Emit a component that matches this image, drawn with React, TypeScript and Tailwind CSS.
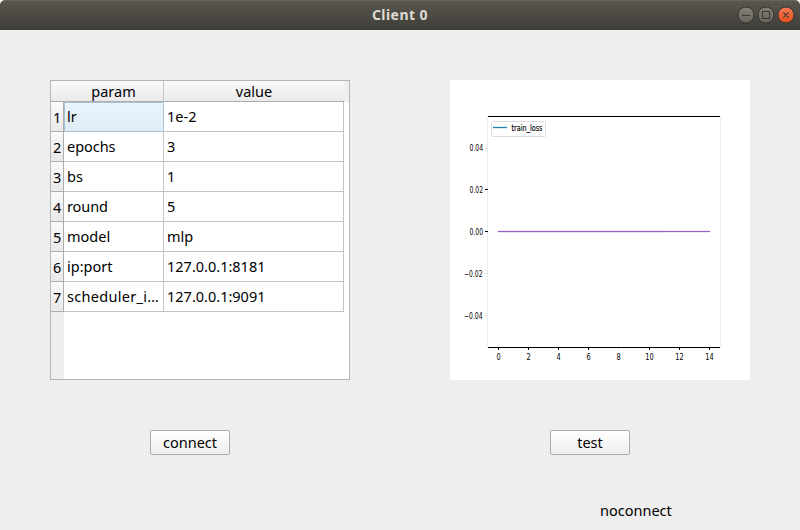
import React from "react";

const rows = [
  { name: "lr", value: "1e-2", spacing: "tracking-normal" },
  { name: "epochs", value: "3", spacing: "tracking-[-0.05px]" },
  { name: "bs", value: "1", spacing: "tracking-normal" },
  { name: "round", value: "5", spacing: "tracking-[-0.1px]" },
  { name: "model", value: "mlp", spacing: "tracking-normal" },
  { name: "ip:port", value: "127.0.0.1:8181", spacing: "tracking-normal" },
  { name: "scheduler_i…", value: "127.0.0.1:9091", spacing: "tracking-[0.3px]" },
];

const yTicks = [
  { y: 68, label: "0.04", x: 19.5, w: 13.5, strong: false },
  { y: 109.5, label: "0.02", x: 19.5, w: 13.5, strong: true },
  { y: 151.5, label: "0.00", x: 19.5, w: 13.5, strong: true },
  { y: 193.5, label: "−0.02", x: 14, w: 18.5, strong: false },
  { y: 235.5, label: "−0.04", x: 14, w: 18.5, strong: false },
];

const xTicks = [
  { x: 48.5, label: "0" },
  { x: 78.5, label: "2" },
  { x: 108.5, label: "4" },
  { x: 138.5, label: "6" },
  { x: 168.5, label: "8" },
  { x: 199.5, label: "10" },
  { x: 229.5, label: "12" },
  { x: 259.5, label: "14" },
];

function TitleBar() {
  return (
    <header className="grid h-[30px] grid-cols-[1fr_auto_1fr] items-start rounded-t-[5px] border-t border-[#67645b] bg-linear-to-b from-[#5a574e] to-[#3e3d38]">
      <span />
      <h1 className="mt-[4px] text-[14px] leading-[20px] font-bold tracking-[0.45px] text-[#dfdbd2]">Client 0</h1>
      <svg className="mt-[3px] mr-[3px] justify-self-end" width="61" height="22" viewBox="0 0 61 22">
        <defs>
          <linearGradient id="grey" x2="0" y2="1">
            <stop stopColor="#85827a" />
            <stop offset="1" stopColor="#65635b" />
          </linearGradient>
          <linearGradient id="orange" x2="0" y2="1">
            <stop stopColor="#f47d55" />
            <stop offset="1" stopColor="#e74c1d" />
          </linearGradient>
        </defs>
        <circle cx="10" cy="11" r="8" fill="url(#grey)" stroke="#35342f" />
        <circle cx="30" cy="11" r="8" fill="url(#grey)" stroke="#35342f" />
        <circle cx="50" cy="11" r="8" fill="url(#orange)" stroke="#35342f" />
        <path d="M6 11.5h8M26.5 7.5h7v7h-7zM47.3 8.3l5.4 5.4M52.7 8.3l-5.4 5.4" fill="none" stroke="#383630" strokeWidth="1.1" />
      </svg>
    </header>
  );
}

function ParamTable() {
  return (
    <section className="flex h-[300px] w-[300px] flex-col border border-[#b5b5b5] bg-white">
      <div className="flex h-[21px] shrink-0 bg-linear-to-b from-[#fafafa] to-[#e9e9e9] text-center leading-[20px]">
        <div className="w-[113px] border-r border-b border-r-[#c8c8c8] border-b-[#adadad] pl-[13px]">param</div>
        <div className="w-[180px] border-b border-[#adadad]">value</div>
        <div className="flex-1 bg-[#eeeeee]" />
      </div>
      <div className="flex flex-1">
        <div className="w-[13px] bg-[#eeeeee]">
          {rows.map((row, i) => (
            <div key={row.name} className="h-[30px] border-r border-b border-[#adadad] bg-linear-to-b from-[#fafafa] to-[#e9e9e9] pl-[2px] leading-[30px]">
              {i + 1}
            </div>
          ))}
        </div>
        <div className="w-[280px]">
          {rows.map((row, i) => (
            <div key={row.name} className="flex h-[30px] leading-[28px] whitespace-nowrap">
              <div
                className={
                  i === 0
                    ? "w-[100px] border border-[#a9c3d5] bg-linear-to-b from-[#e9f4fc] to-[#e0ebf4] pl-[2px] leading-[26px]"
                    : "w-[100px] border-r border-b border-[#c4c4c4] pl-[3px]"
                }
              >
                <span className={row.spacing}>{row.name}</span>
              </div>
              <div className="w-[180px] border-r border-b border-[#c4c4c4] pl-[3px]">{row.value}</div>
            </div>
          ))}
        </div>
      </div>
    </section>
  );
}

function LossChart() {
  return (
    <svg className="bg-white" width="300" height="300" viewBox="0 0 300 300" fontFamily="'DejaVu Sans', sans-serif" fontSize="7.5">
      <path d="M37.5 37v230M270.5 37v230" stroke="#ededed" />
      <path d="M38 36.5h232M38 267.5h232" stroke="#000" />
      <rect x="41.5" y="41.5" width="54" height="15" rx="1" fill="#fff" stroke="#dcdcdc" />
      <path d="M43 47.5h14" stroke="#1f83ad" strokeWidth="1.3" />
      <text x="61.5" y="50.5" fontSize="8" stroke="#000" strokeWidth="0.15" textLength="31" lengthAdjust="spacingAndGlyphs">train_loss</text>
      {yTicks.map((t) => (
        <g key={t.label}>
          <path d={`M35 ${Math.floor(t.y)}.5h3`} stroke={t.strong ? "#000" : "#e2e2e2"} />
          <text x={t.x} y={t.y + 3} fontSize="8" textLength={t.w} lengthAdjust="spacingAndGlyphs">{t.label}</text>
        </g>
      ))}
      {xTicks.map((t) => (
        <g key={t.label}>
          <path d={`M${t.x} 268v2`} stroke={t.label === "8" ? "#e2e2e2" : "#000"} />
          <text x={t.x} y="279.5" fontSize="8" textAnchor="middle" textLength={t.label.length * 4.2} lengthAdjust="spacingAndGlyphs">{t.label}</text>
        </g>
      ))}
      <path d="M48 151.5h166" stroke="#efe0f6" strokeWidth="3" />
      <path d="M214 151.5h46" stroke="#f3e8f9" strokeWidth="3" />
      <path d="M48 151.5h212" stroke="#9a62c2" />
    </svg>
  );
}

function PushButton({ children }: { children: React.ReactNode }) {
  return (
    <button className="h-[25px] w-[80px] rounded-[2px] border border-[#adadad] bg-linear-to-b from-[#fefefe] to-[#eeeeee] leading-[23px]">
      {children}
    </button>
  );
}

export default function App() {
  return (
    <div className="h-[530px] w-[800px] overflow-hidden bg-white font-['Noto_Sans','Open_Sans',sans-serif] text-[14.5px] text-black">
      <TitleBar />
      <main className="h-[500px] bg-[#eeeeee] pt-[50px]">
        <div className="flex justify-between px-[50px]">
          <ParamTable />
          <LossChart />
        </div>
        <div className="mt-[50px] flex justify-between pr-[170px] pl-[150px]">
          <PushButton>connect</PushButton>
          <PushButton>test</PushButton>
        </div>
        <p className="mt-[44px] pl-[600px] leading-[22px]">noconnect</p>
      </main>
    </div>
  );
}
